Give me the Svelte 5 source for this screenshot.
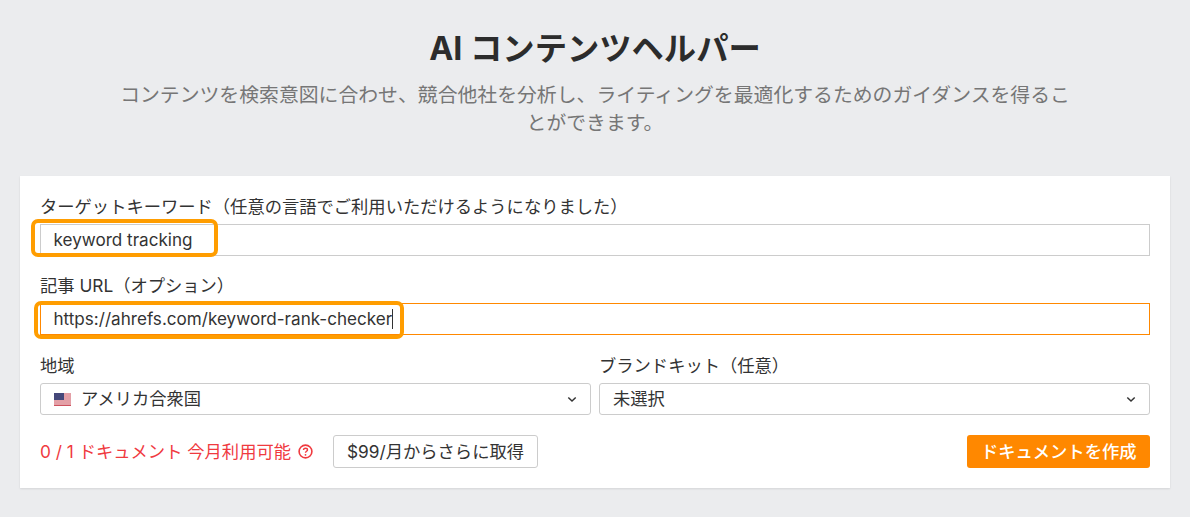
<script>
  const fontNote = 'Inter with Noto CJK JP';
</script>

<main class="page" data-font={fontNote}>
  <header class="intro">
    <h1>AI コンテンツヘルパー</h1>
    <p>コンテンツを検索意図に合わせ、競合他社を分析し、ライティングを最適化するためのガイダンスを得ることができます。</p>
  </header>

  <form class="card">
    <div class="field">
      <span class="label">ターゲットキーワード（任意の言語でご利用いただけるようになりました）</span>
      <div class="input first">
        <span class="value">keyword tracking</span>
        <span class="mark mark-a"></span>
      </div>
    </div>

    <div class="field">
      <span class="label">記事 URL（オプション）</span>
      <div class="input focused">
        <span class="value">https://ahrefs.com/keyword-rank-checker</span><span class="caret"></span>
        <span class="mark mark-b"></span>
      </div>
    </div>

    <div class="selects">
      <div class="field">
        <span class="label">地域</span>
        <div class="select">
          <svg class="flag" width="17" height="13" viewBox="0 0 17 13">
            <rect width="17" height="13" fill="#fff" />
            <path d="M0 1h17M0 3h17M0 5h17M0 7h17M0 9h17M0 11h17M0 12.6h17" stroke="#c8404f" stroke-width="1" />
            <rect width="10" height="7" fill="#45487a" />
          </svg>
          <span class="value">アメリカ合衆国</span>
          <svg class="chev" width="10" height="7" viewBox="0 0 10 7"><path d="M1.3 1.5L5 5l3.7-3.5" fill="none" stroke="#333" stroke-width="1.5" /></svg>
        </div>
      </div>
      <div class="field">
        <span class="label">ブランドキット（任意）</span>
        <div class="select">
          <span class="value">未選択</span>
          <svg class="chev" width="10" height="7" viewBox="0 0 10 7"><path d="M1.3 1.5L5 5l3.7-3.5" fill="none" stroke="#333" stroke-width="1.5" /></svg>
        </div>
      </div>
    </div>

    <div class="actions">
      <span class="quota">0 / 1 ドキュメント 今月利用可能</span>
      <svg class="help" width="15" height="15" viewBox="0 0 15 15">
        <circle cx="7.5" cy="7.5" r="6.4" fill="none" stroke="#f03a3f" stroke-width="1.6" />
        <path d="M5.5 6c0-1.1.9-1.8 2-1.8s2 .7 2 1.7c0 1.4-2 1.4-2 2.8" fill="none" stroke="#f03a3f" stroke-width="1.4" />
        <circle cx="7.5" cy="10.8" r=".9" fill="#f03a3f" />
      </svg>
      <button type="button" class="upgrade">$99/月からさらに取得</button>
      <button type="button" class="create">ドキュメントを作成</button>
    </div>
  </form>
</main>

<style>
  :global(body) {
    background: #ebecee;
  }

  .page {
    padding: 0 20px 28px;
    font-family: Inter, "Noto Sans CJK JP", sans-serif;
    font-size: 17.3px;
    color: #333;
  }

  .intro {
    width: 960px;
    margin: 0 auto;
    padding-top: 27px;
    text-align: center;
  }

  h1 {
    margin: 0;
    font-size: 32.3px;
    line-height: 44px;
    font-weight: 700;
    color: #2c2c2c;
  }

  .intro p {
    margin: 10px 0 0;
    font-size: 19.85px;
    line-height: 28px;
    color: #767676;
    line-break: anywhere;
  }

  .card {
    margin-top: 39px;
    padding: 18px 20px 20px;
    background: #fff;
    box-shadow: 0 1px 2px rgba(0, 0, 0, 0.1);
  }

  .field {
    display: flex;
    flex-direction: column;
    min-width: 0;
    margin-bottom: 17px;
  }

  .label {
    line-height: 26px;
    margin-bottom: 4px;
  }

  .input {
    position: relative;
    display: flex;
    align-items: center;
    height: 32px;
    box-sizing: border-box;
    padding-left: 12.5px;
    border: 1px solid #ccc;
    font-size: 17.1px;
  }

  .input .value {
    margin-bottom: 2px;
  }

  .focused {
    border-color: #ff8800;
  }

  .caret {
    width: 1px;
    height: 20px;
    background: #333;
  }

  .mark {
    position: absolute;
    border: 4px solid #ff9d00;
    border-radius: 7px;
    pointer-events: none;
  }

  .mark-a {
    left: -10px;
    top: -6px;
    width: 179px;
    height: 30px;
  }

  .mark-b {
    left: -7px;
    top: -3px;
    width: 362px;
    height: 30px;
  }

  .selects {
    display: grid;
    grid-template-columns: 1fr 1fr;
    gap: 8px;
    padding-top: 1px;
  }

  .select {
    display: flex;
    align-items: center;
    height: 32px;
    box-sizing: border-box;
    padding: 0 13px;
    border: 1px solid #ccc;
    border-radius: 3px;
  }

  .select .value {
    margin-bottom: 3px;
  }

  .flag {
    margin-right: 10px;
  }

  .chev {
    margin-left: auto;
  }

  .actions {
    display: flex;
    align-items: center;
    margin-top: 3px;
  }

  .quota {
    margin-bottom: 2px;
    color: #f03a3f;
  }

  .help {
    margin-left: 7px;
  }

  button {
    height: 33px;
    box-sizing: border-box;
    padding-bottom: 3px;
    border-radius: 3px;
    font: inherit;
  }

  .upgrade {
    margin-left: 20px;
    padding-left: 13px;
    padding-right: 13px;
    border: 1px solid #ccc;
    background: #fff;
    color: #333;
  }

  .create {
    margin-left: auto;
    padding-left: 13.5px;
    padding-right: 13.5px;
    border: 0;
    background: #ff8800;
    color: #fff;
    font-weight: 500;
  }
</style>
